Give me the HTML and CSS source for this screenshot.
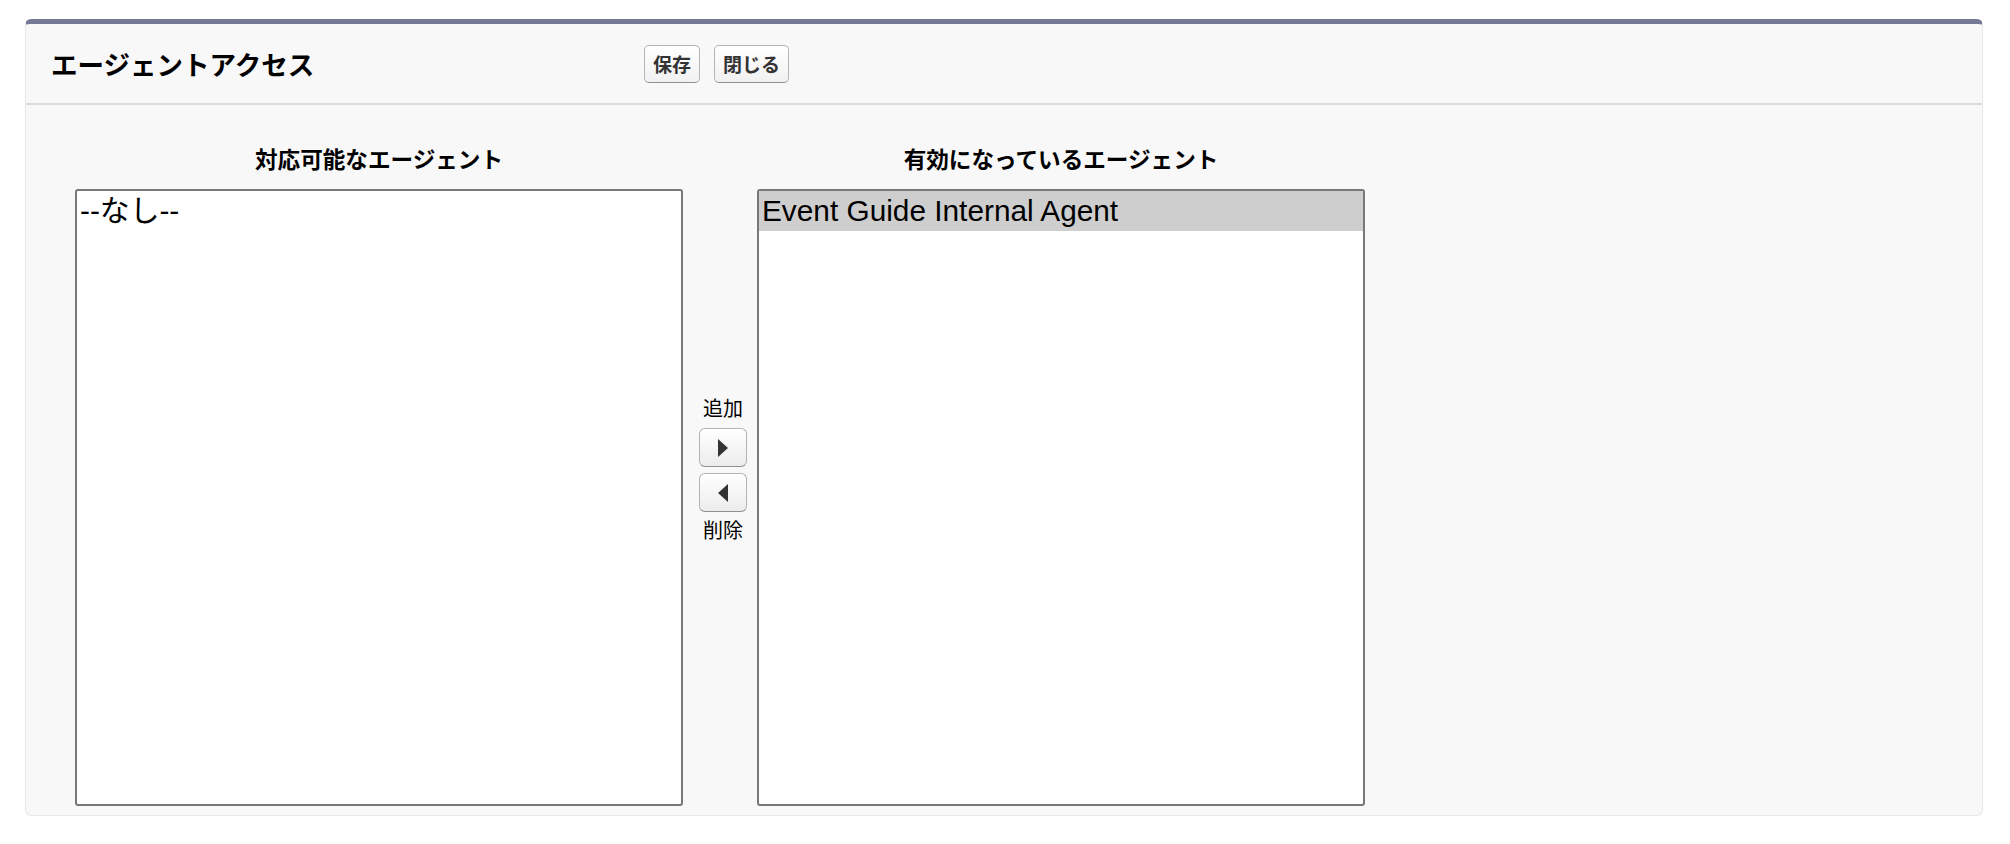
FILE: index.html
```html
<!DOCTYPE html>
<html lang="ja">
<head>
    <meta charset="UTF-8">
    <meta name="viewport" content="width=device-width, initial-scale=1.0">
    <title>エージェントアクセス</title>
    <link rel="stylesheet" href="styles.css">
</head>
<body>
    <div class="panel">
        <div class="panel-header">
            <h2 class="panel-title">エージェントアクセス</h2>
            <div class="panel-buttons">
                <button class="btn" type="button">保存</button>
                <button class="btn" type="button">閉じる</button>
            </div>
        </div>

        <div class="panel-body">
            <div class="picklist-col">
                <div class="col-label">対応可能なエージェント</div>
                <div class="listbox" role="listbox">
                    <div class="option">--なし--</div>
                </div>
            </div>

            <div class="picklist-mid">
                <div class="mid-label">追加</div>
                <button class="arrow-btn" type="button" title="追加">
                    <svg width="12" height="18" viewBox="0 0 12 18"><polygon points="1,0 11,9 1,18" fill="#333"/></svg>
                </button>
                <button class="arrow-btn second" type="button" title="削除">
                    <svg width="12" height="18" viewBox="0 0 12 18"><polygon points="11,0 1,9 11,18" fill="#333"/></svg>
                </button>
                <div class="mid-label bottom">削除</div>
            </div>

            <div class="picklist-col">
                <div class="col-label">有効になっているエージェント</div>
                <div class="listbox" role="listbox">
                    <div class="option selected">Event Guide Internal Agent</div>
                </div>
            </div>
        </div>
    </div>
</body>
</html>
```

FILE: styles.css
```css
body {
    margin: 0;
    padding: 19px 27px 27px 25px;
    background: #fff;
    font-family: "Liberation Sans", "Noto Sans CJK JP", sans-serif;
    color: #000;
}
.panel {
    background: #f8f8f8;
    border: 1px solid #e8e8e8;
    border-top: 5px solid #747a96;
    border-radius: 6px;
    padding-bottom: 9px;
}
.panel-header {
    display: flex;
    align-items: center;
    height: 79px;
    padding-left: 25px;
    border-bottom: 2px solid #dcdcdc;
}
.panel-title {
    margin: 0;
    width: 593px;
    font-family: "Noto Sans CJK JP", sans-serif;
    font-size: 26.5px;
    font-weight: bold;
}
.panel-buttons {
    display: flex;
    gap: 14px;
}
.btn {
    height: 38px;
    padding: 0 8px;
    font-family: "Noto Sans CJK JP", sans-serif;
    font-size: 19px;
    font-weight: bold;
    color: #333;
    background: linear-gradient(#ffffff, #f1f1f1);
    border: 1px solid #b5b5b5;
    border-bottom-color: #8f8f8f;
    border-radius: 5px;
    cursor: pointer;
}
.panel-body {
    display: flex;
    padding: 39px 0 0 49px;
}
.picklist-col {
    width: 608px;
}
.col-label {
    height: 30px;
    line-height: 30px;
    margin-bottom: 15px;
    text-align: center;
    font-family: "Noto Sans CJK JP", sans-serif;
    font-size: 22.6px;
    font-weight: bold;
}
.listbox {
    height: 613px;
    background: #fff;
    border: 2px solid #787878;
    border-radius: 3px;
}
.option {
    height: 40px;
    line-height: 40px;
    padding: 0 3px;
    font-size: 29.8px;
    white-space: nowrap;
}
.option.selected {
    background: #cecece;
}
.picklist-mid {
    width: 68px;
    display: flex;
    flex-direction: column;
    align-items: center;
    padding: 252px 0 0 6px;
}
.mid-label {
    font-family: "Noto Sans CJK JP", sans-serif;
    font-size: 20px;
    line-height: 24px;
    margin-bottom: 8px;
}
.mid-label.bottom {
    margin: 6px 0 0;
}
.arrow-btn {
    width: 48px;
    height: 39px;
    padding: 0;
    display: flex;
    align-items: center;
    justify-content: center;
    background: linear-gradient(#ffffff, #ececec);
    border: 1px solid #b4b4b4;
    border-bottom-color: #909090;
    border-radius: 6px;
    cursor: pointer;
}
.arrow-btn.second {
    margin-top: 6px;
}
```
